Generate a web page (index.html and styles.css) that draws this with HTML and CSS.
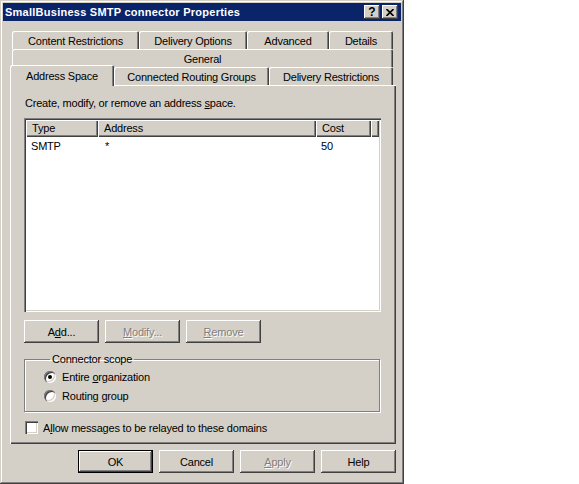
FILE: index.html
```html
<!DOCTYPE html>
<html>
<head>
    <meta charset="UTF-8"/>
    <title>SmallBusiness SMTP connector Properties</title>
    <link rel="stylesheet" href="styles.css">
</head>
<body>
<div class="window">
    <!-- Caption -->
    <div class="titlebar">
        <span class="title">SmallBusiness SMTP connector Properties</span>
        <div class="cap-btn help">?</div>
        <div class="cap-btn close">
            <svg width="8" height="7" viewBox="0 0 8 7"><path d="M0.5 0 L7.5 7 M7.5 0 L0.5 7" stroke="#000" stroke-width="1.6" fill="none"/></svg>
        </div>
    </div>

    <!-- Tab strip, three rows -->
    <div class="tabs">
        <div class="tab-row back">
            <div class="tab w-cr">Content Restrictions</div>
            <div class="tab w-do">Delivery Options</div>
            <div class="tab w-adv">Advanced</div>
            <div class="tab w-det">Details</div>
        </div>
        <div class="tab-row back">
            <div class="tab w-full">General</div>
        </div>
        <div class="tab-row front">
            <div class="tab w-as selected">Address Space</div>
            <div class="tab w-crg">Connected Routing Groups</div>
            <div class="tab w-dr">Delivery Restrictions</div>
        </div>
    </div>

    <!-- Page -->
    <div class="panel">
        <div class="intro">Create, modify, or remove an address <u>s</u>pace.</div>

        <div class="listview">
            <div class="lv-header">
                <div class="col c-type">Type</div>
                <div class="col c-addr">Address</div>
                <div class="col c-cost">Cost</div>
                <div class="col c-fill"></div>
            </div>
            <div class="lv-row">
                <div class="cell c-type">SMTP</div>
                <div class="cell c-addr">*</div>
                <div class="cell c-cost">50</div>
            </div>
        </div>

        <div class="btn-row">
            <div class="btn">A<u>d</u>d...</div>
            <div class="btn disabled"><u>M</u>odify...</div>
            <div class="btn disabled"><u>R</u>emove</div>
        </div>

        <fieldset class="group">
            <legend>Connector scope</legend>
            <div class="option">
                <span class="radio checked"></span>
                <span>Entire <u>o</u>rganization</span>
            </div>
            <div class="option">
                <span class="radio"></span>
                <span>Routing <u>g</u>roup</span>
            </div>
        </fieldset>

        <div class="check-line">
            <span class="checkbox"></span>
            <span>A<u>l</u>low messages to be relayed to these domains</span>
        </div>
    </div>

    <!-- Dialog buttons -->
    <div class="footer">
        <div class="btn default">OK</div>
        <div class="btn">Cancel</div>
        <div class="btn disabled"><u>A</u>pply</div>
        <div class="btn">Help</div>
    </div>
</div>
</body>
</html>
```

FILE: styles.css
```css
body {
margin: 0;
background-color: #fff;
font-family: "Liberation Sans", Arial, sans-serif;
font-size: 11px;
letter-spacing: -0.2px;
color: #000;
}
u {
text-decoration: underline;
text-underline-offset: 1px;
}
.window {
width: 404px;
height: 484px;
box-sizing: border-box;
padding: 3px;
background-color: #d4d0c8;
box-shadow: inset -1px -1px #404040, inset 1px 1px #d4d0c8, inset -2px -2px #808080, inset 2px 2px #fff;
display: flex;
flex-direction: column;
}
.titlebar {
height: 18px;
background-color: #0a246a;
color: #fff;
font-weight: bold;
font-size: 11px;
letter-spacing: 0.25px;
display: flex;
align-items: center;
padding: 0 3px 0 2px;
}
.title {
flex: 1;
}
.cap-btn {
width: 16px;
height: 14px;
box-sizing: border-box;
background-color: #d4d0c8;
box-shadow: inset -1px -1px #404040, inset 1px 1px #fff, inset -2px -2px #808080;
color: #000;
display: flex;
align-items: center;
justify-content: center;
font-size: 12px;
font-weight: bold;
line-height: 14px;
letter-spacing: 0;
}
.close {
margin-left: 2px;
}
/* Tabs */
.tabs {
margin-top: 10px;
}
.tab-row {
display: flex;
height: 18px;
}
.tab-row.back {
margin-left: 9px;
}
.tab-row.front {
margin-left: 7px;
}
.tab {
box-sizing: border-box;
height: 18px;
display: flex;
align-items: center;
justify-content: center;
padding-top: 2px;
border-radius: 2px 2px 0 0;
box-shadow: inset 1px 1px #fff, inset -1px 0 #404040, inset -2px 0 #808080;
white-space: nowrap;
}
.w-cr { width: 127px; }
.w-do { width: 108px; }
.w-adv { width: 82px; }
.w-det { width: 64px; }
.w-full { width: 381px; }
.w-as { width: 104px; }
.w-crg { width: 155px; }
.w-dr { width: 124px; }
.tab.selected {
height: 21px;
margin-top: -2px;
padding-top: 0;
background-color: #d4d0c8;
position: relative;
z-index: 1;
box-shadow: inset 1px 1px #fff, inset -1px 0 #404040, inset -2px 0 #808080;
}
/* Page */
.panel {
margin-left: 7px;
width: 386px;
height: 359px;
box-sizing: border-box;
padding: 12px 0 0 14px;
box-shadow: inset 1px 1px #fff, inset -1px -1px #404040, inset -2px -2px #808080;
}
.intro {
line-height: 13px;
padding-left: 1px;
}
.listview {
margin-top: 8px;
width: 357px;
height: 194px;
box-sizing: border-box;
padding: 2px;
background-color: #fff;
box-shadow: inset 1px 1px #808080, inset 2px 2px #404040, inset -1px -1px #fff, inset -2px -2px #d4d0c8;
}
.lv-header {
display: flex;
height: 17px;
}
.col {
box-sizing: border-box;
height: 17px;
line-height: 16px;
padding-left: 6px;
background-color: #d4d0c8;
box-shadow: inset 1px 1px #fff, inset -1px -1px #404040, inset -2px -2px #808080;
}
.c-type { width: 72px; }
.c-addr { width: 218px; }
.c-cost { width: 55px; }
.c-fill { width: 8px; }
.lv-row {
display: flex;
height: 15px;
line-height: 15px;
margin-top: 2px;
}
.cell.c-type { padding-left: 5px; }
.cell.c-addr { padding-left: 7px; }
.cell.c-cost { padding-left: 5px; }
.cell {
box-sizing: border-box;
}
/* Push buttons */
.btn {
width: 75px;
height: 23px;
box-sizing: border-box;
display: flex;
align-items: center;
justify-content: center;
background-color: #d4d0c8;
box-shadow: inset -1px -1px #404040, inset 1px 1px #fff, inset -2px -2px #808080;
}
.btn.disabled {
color: #808080;
text-shadow: 1px 1px #fff;
}
.btn.default {
box-shadow: inset 0 0 0 1px #000, inset -2px -2px #404040, inset 2px 2px #fff, inset -3px -3px #808080;
}
.btn-row {
display: flex;
gap: 6px;
margin-top: 8px;
}
/* Group box */
.group {
margin: 10px 0 0 0;
padding: 1px 0 0 19px;
width: 356px;
height: 59px;
box-sizing: border-box;
border: 1px solid #808080;
box-shadow: inset 1px 1px #fff, 1px 1px #fff;
}
.group legend {
padding: 0 2px;
margin-left: 6px;
line-height: 13px;
}
.option {
display: flex;
align-items: center;
gap: 6px;
height: 19px;
}
.radio {
width: 12px;
height: 12px;
border-radius: 50%;
background-color: #fff;
box-shadow: inset 1px 1px #808080, inset 2px 2px #404040, inset -1px -1px #fff, inset -2px -2px #d4d0c8;
display: flex;
align-items: center;
justify-content: center;
}
.radio.checked::after {
content: "";
width: 4px;
height: 4px;
border-radius: 50%;
background-color: #000;
}
/* Check box */
.check-line {
display: flex;
align-items: center;
gap: 5px;
margin-top: 9px;
padding-left: 1px;
}
.checkbox {
width: 13px;
height: 13px;
background-color: #fff;
box-shadow: inset 1px 1px #808080, inset 2px 2px #404040, inset -1px -1px #fff, inset -2px -2px #d4d0c8;
}
/* Dialog buttons */
.footer {
display: flex;
justify-content: flex-end;
gap: 6px;
margin-top: 6px;
padding-right: 5px;
}
```
